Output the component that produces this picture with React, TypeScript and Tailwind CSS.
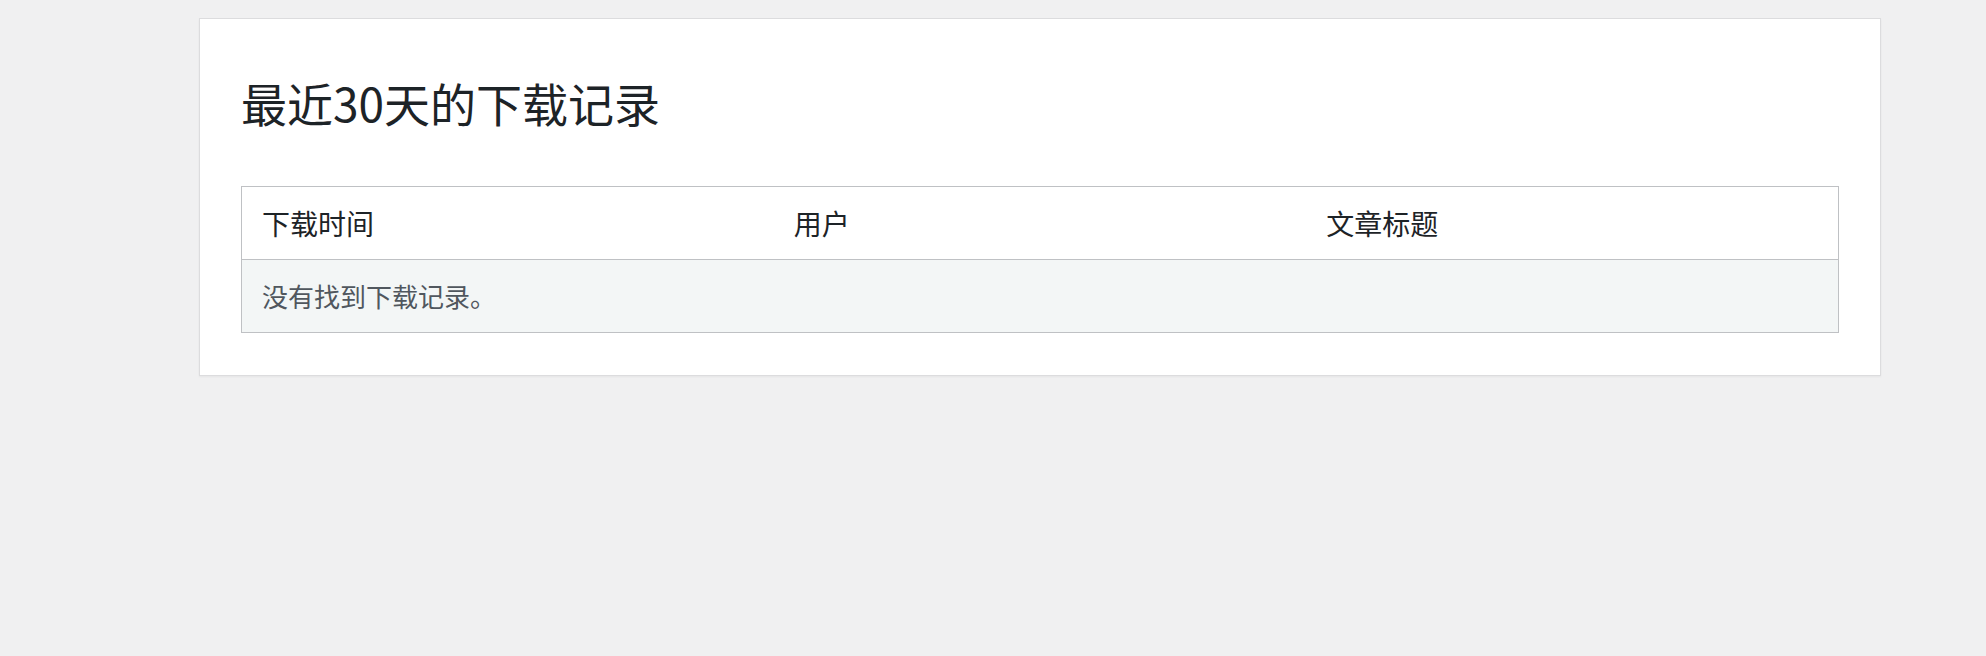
export default function App() {
  const font = { fontFamily: '"Noto Sans CJK SC", "Liberation Sans", sans-serif' };

  return (
    <div className="min-h-[656px] w-full bg-[#f0f0f1] pt-[18px]" style={font}>
      <div className="ml-[199px] w-[1682px] border border-[#dcdcde] bg-white px-[41px] pb-[42px] shadow-[0_1px_2px_rgba(0,0,0,0.05)]">
        <h2 className="pt-[53px] pb-[54px] text-[46px] leading-[60px] font-normal text-[#1d2327]">
          最近30天的下载记录
        </h2>
        <table className="w-full table-fixed border-collapse border border-[#bfc1c4] leading-[40px]">
          <thead>
            <tr className="bg-white text-[28px] text-[#1d2327]">
              <th className="border-b border-[#bfc1c4] px-[20px] py-[16px] text-left font-normal">下载时间</th>
              <th className="border-b border-[#bfc1c4] px-[20px] py-[16px] text-left font-normal">用户</th>
              <th className="border-b border-[#bfc1c4] px-[20px] py-[16px] text-left font-normal">文章标题</th>
            </tr>
          </thead>
          <tbody>
            <tr className="bg-[#f3f6f6] text-[26px] text-[#50575e]">
              <td colSpan={3} className="px-[20px] py-[16px]">没有找到下载记录。</td>
            </tr>
          </tbody>
        </table>
      </div>
    </div>
  );
}
